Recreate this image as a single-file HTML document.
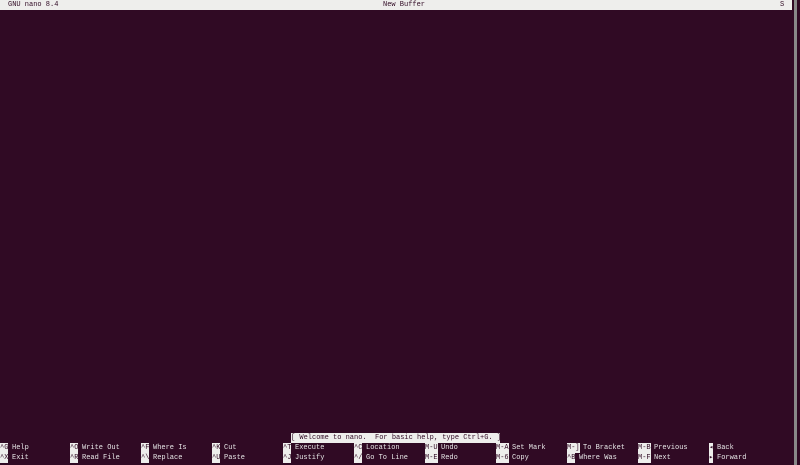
<!DOCTYPE html>
<html><head><style>
body{margin:0;width:800px;height:465px;background:#300a24;overflow:hidden;position:relative;font-family:"Liberation Mono",monospace;font-size:7px;color:#e8e8e8}
.a{position:absolute;white-space:pre;line-height:10px;height:10px}
.k{background:#eeeeec;color:#300a24}
</style></head><body>
<div class="a k" style="left:0;top:0;width:792px;"></div>
<div class="a" style="left:8px;top:0;color:#300a24">GNU nano 8.4</div>
<div class="a" style="left:383px;top:0;color:#300a24">New Buffer</div>
<div class="a" style="left:780px;top:0;color:#300a24">S</div>
<div class="a" style="left:794px;top:0;width:3px;height:465px;background:#888"></div>
<div class="a k" style="left:291px;top:433px;width:209px">[ Welcome to nano.  For basic help, type Ctrl+G. ]</div>

<div class="a k" style="left:0;top:443px">^G</div><div class="a" style="left:12px;top:443px">Help</div>
<div class="a k" style="left:0;top:453px">^X</div><div class="a" style="left:12px;top:453px">Exit</div>
<div class="a k" style="left:70px;top:443px">^O</div><div class="a" style="left:82px;top:443px">Write Out</div>
<div class="a k" style="left:70px;top:453px">^R</div><div class="a" style="left:82px;top:453px">Read File</div>
<div class="a k" style="left:141px;top:443px">^F</div><div class="a" style="left:153px;top:443px">Where Is</div>
<div class="a k" style="left:141px;top:453px">^\</div><div class="a" style="left:153px;top:453px">Replace</div>
<div class="a k" style="left:212px;top:443px">^K</div><div class="a" style="left:224px;top:443px">Cut</div>
<div class="a k" style="left:212px;top:453px">^U</div><div class="a" style="left:224px;top:453px">Paste</div>
<div class="a k" style="left:283px;top:443px">^T</div><div class="a" style="left:295px;top:443px">Execute</div>
<div class="a k" style="left:283px;top:453px">^J</div><div class="a" style="left:295px;top:453px">Justify</div>
<div class="a k" style="left:354px;top:443px">^C</div><div class="a" style="left:366px;top:443px">Location</div>
<div class="a k" style="left:354px;top:453px">^/</div><div class="a" style="left:366px;top:453px">Go To Line</div>
<div class="a k" style="left:425px;top:443px">M-U</div><div class="a" style="left:441px;top:443px">Undo</div>
<div class="a k" style="left:425px;top:453px">M-E</div><div class="a" style="left:441px;top:453px">Redo</div>
<div class="a k" style="left:496px;top:443px">M-A</div><div class="a" style="left:512px;top:443px">Set Mark</div>
<div class="a k" style="left:496px;top:453px">M-6</div><div class="a" style="left:512px;top:453px">Copy</div>
<div class="a k" style="left:567px;top:443px">M-]</div><div class="a" style="left:583px;top:443px">To Bracket</div>
<div class="a k" style="left:567px;top:453px">^B</div><div class="a" style="left:579px;top:453px">Where Was</div>
<div class="a k" style="left:638px;top:443px">M-B</div><div class="a" style="left:654px;top:443px">Previous</div>
<div class="a k" style="left:638px;top:453px">M-F</div><div class="a" style="left:654px;top:453px">Next</div>
<div class="a k" style="left:709px;top:443px">◂</div><div class="a" style="left:717px;top:443px">Back</div>
<div class="a k" style="left:709px;top:453px">▸</div><div class="a" style="left:717px;top:453px">Forward</div>
</body></html>
